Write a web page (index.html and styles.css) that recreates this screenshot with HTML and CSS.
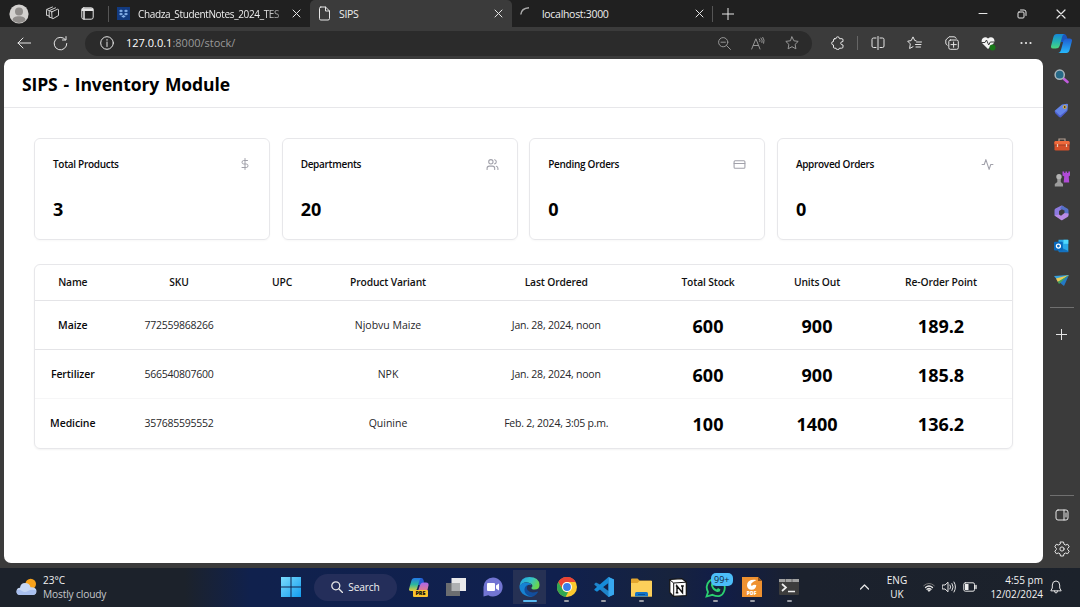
FILE: index.html
```html
<!DOCTYPE html>
<html lang="en">
<head>
<meta charset="utf-8">
<title>SIPS</title>
<link rel="stylesheet" href="styles.css">
</head>
<body>
<div class="screen">
  <div class="tabbar">
    <span class="slot w37"><svg width="20" height="20" viewBox="0 0 20 20"><circle cx="10" cy="10" r="9.6" fill="#d3d1cf"/><circle cx="10" cy="7.4" r="4" fill="#8f8c8a"/><path d="M3.600 16.200c0-3 2.500-4 6.400-4s6.400 1 6.400 4A9 9 0 0 1 10 19a9 9 0 0 1-6.400-2.800z" fill="#8f8c8a"/></svg></span>
    <span class="slot w31"><svg class="line thin" width="15" height="15" viewBox="0 0 15 15"><path d="M7 5.800 12.500 3.200Q13.500 3 13.500 4V9.500L8 12.700Q7 13 7 12zM4.200 11V5.500Q4.200 4.700 5 4.300L10.500 1.800M1.500 9V4.200Q1.500 3.500 2.200 3.200L7.500 1M7 5.800 4.500 4.700M4.200 11 7 12M1.500 9l2.700 1M1.800 3.500l2.500 1.200"/></svg></span>
    <span class="slot w39"><svg class="line" width="13" height="13" viewBox="0 0 13 13"><rect x=".8" y=".8" width="11.400" height="11.400" rx="2"/><path d="M1.500 2.200h10M1.500 3.200h10" stroke-width="1.800"/><path d="M3 4v8" stroke-width="1.500"/></svg></span>
    <div class="tab first">
      <svg class="favicon" width="13" height="13" viewBox="0 0 13 13"><path fill="#123a80" d="M0 0h13v13H0z"/><path fill="#83aee8" d="m4 2.500 2.200 1.400L4 5.300 1.800 3.900zm5 0 2.200 1.400L9 5.300 6.800 3.900zM4 5.700l2.200 1.400L4 8.500 1.800 7.100zm5 0 2.200 1.400L9 8.500 6.800 7.100zM6.500 8l2.200 1.400-2.200 1.400-2.200-1.400z"/></svg>
      <span class="tab-title fade">Chadza_StudentNotes_2024_TES</span>
      <svg class="line close" width="9" height="9" viewBox="0 0 9 9"><path d="m1 1 7 7M8 1 1 8"/></svg>
    </div>
    <div class="tab active">
      <svg class="line favicon" width="13" height="15" viewBox="0 0 13 15"><path d="M2.800 1H7.500L11.500 5V12.500Q11.500 14 10 14H2.800Q1.500 14 1.500 12.500V2.400Q1.500 1 2.800 1zM7.500 1V5H11.500"/></svg>
      <span class="tab-title">SIPS</span>
      <svg class="line close" width="9" height="9" viewBox="0 0 9 9"><path d="m1 1 7 7M8 1 1 8"/></svg>
    </div>
    <div class="tab last">
      <svg class="favicon" width="13" height="13" viewBox="0 0 13 13"><path d="M.8 7.500Q1.500 1.300 9 .8" fill="none" stroke="#aaa" stroke-width="1.500"/></svg>
      <span class="tab-title">localhost:3000</span>
      <svg class="line close" width="9" height="9" viewBox="0 0 9 9"><path d="m1 1 7 7M8 1 1 8"/></svg>
    </div>
    <span class="slot w30"><svg class="line" width="12" height="12" viewBox="0 0 12 12"><path d="M6 0v12M0 6h12"/></svg></span>
    <div class="window-controls">
      <svg class="line" width="10" height="10" viewBox="0 0 10 10"><path d="M1 4.500h8"/></svg>
      <svg class="line" width="10" height="10" viewBox="0 0 10 10"><rect x="1" y="3" width="6" height="6" rx="1"/><path d="M3.500 1H7Q9 1 9 3V6.500"/></svg>
      <svg class="line" width="10" height="10" viewBox="0 0 10 10"><path d="m1 1 8 8M9 1 1 9" stroke-width="1.200"/></svg>
    </div>
  </div>

  <div class="toolbar">
    <span class="slot w37"><svg class="line" width="14" height="12" viewBox="0 0 14 12"><path d="M14 6H1M6 1 1 6l5 5"/></svg></span>
    <span class="slot w37"><svg class="line" width="15" height="15" viewBox="0 0 15 15"><path d="M12.300 3.500A6.300 6.300 0 1 0 13.800 7.500M13 .6V4H9.500"/></svg></span>
    <div class="address">
      <svg class="line" width="14" height="14" viewBox="0 0 14 14"><circle cx="7" cy="7" r="6.300"/><path d="M7 6v4.500M7 3.500v.8"/></svg>
      <span class="url">127.0.0.1<span class="path">:8000/stock/</span></span>
      <span class="slot w34 dim"><svg class="line" width="13" height="13" viewBox="0 0 13 13"><circle cx="5.200" cy="5.200" r="4.600"/><path d="M3 5.200h4.400M8.500 8.500l4 4"/></svg></span>
      <span class="slot w34 dim"><svg class="line" width="14" height="13" viewBox="0 0 14 13"><path d="M.7 12 4.900 1.800 9 12M2.300 8.500h5.200M8.300 2q1.200 1 .6 2.500M10 1q2 2 1 4.500M11.800.3q2.200 2.700.9 6"/></svg></span>
      <span class="slot w34 dim"><svg class="line" width="14" height="14" viewBox="0 0 14 14"><path d="m7 .9 1.900 3.900 4.300.6-3.100 3 .8 4.400L7 10.700l-3.900 2.100.8-4.400-3.100-3 4.300-.6z"/></svg></span>
    </div>
    <span class="slot w37 puzzle"><svg class="line" width="14" height="14" viewBox="0 0 14 14"><path d="M3.500 2.700H5Q5 .8 6.700.8T8.500 2.700H11Q12 2.700 12 4V5.500Q9.700 5.500 9.700 7.200T12 9V11Q12 12.200 10.700 12.200H8.500Q8.500 13.500 6.700 13.500T5 12.200H3.500Q2.500 12.200 2.500 11V9Q.7 9 .7 7.200T2.500 5.500V4Q2.500 2.700 3.500 2.700z"/></svg></span>
    <span class="divider"></span>
    <span class="slot w37"><svg class="line" width="14" height="14" viewBox="0 0 14 14"><path d="M5 2H2.500Q1 2 1 3.500V10Q1 11.500 2.500 11.500H5M9 2H11.500Q13 2 13 3.500V10Q13 11.500 11.500 11.500H9M7 0V14"/></svg></span>
    <span class="slot w37"><svg class="line" width="15" height="14" viewBox="0 0 15 14"><path d="M9 4.700 7.800 4.600 6 .9 4.200 4.600.7 5.200l2.600 2.700-.7 4.600L6 10.700M9.500 6h5M8.500 8.500h5.500M9 11h4.500"/></svg></span>
    <span class="slot w37"><svg class="line" width="14" height="14" viewBox="0 0 14 14"><path d="M2.200 9.200Q.8 8.500.8 7V4L4 .8H9Q10.700.8 11.200 2.300"/><rect x="3.800" y="4" width="9.500" height="9.300" rx="1.600"/><path d="M8.600 6v5.300M6 8.600h5.300"/></svg></span>
    <span class="slot w37"><svg width="15" height="15" viewBox="0 0 15 15"><path d="M7 13 1.500 7.500Q-.3 5 1.500 2.500Q4.500 0 7 2.500 10 0 12.700 2.500 14.300 5 12.500 7.500z" fill="#f3f3f3"/><path d="M.5 6.500H4L5.500 4l2.200 5 1.600-3H13" fill="none" stroke="#3b3b3b"/><circle cx="11.500" cy="11.500" r="3" fill="#187718"/></svg></span>
    <span class="slot w37"><svg width="12" height="4" viewBox="0 0 12 4" fill="#e8e8e8"><circle cx="1.500" cy="2" r="1.100"/><circle cx="6" cy="2" r="1.100"/><circle cx="10.500" cy="2" r="1.100"/></svg></span>
    <span class="slot w34"><svg width="21" height="19" viewBox="0 0 20 19" preserveAspectRatio="none"><defs><linearGradient id="cp1" x2="0" y2="1"><stop stop-color="#1687d8"/><stop offset=".55" stop-color="#25b5b0"/><stop offset="1" stop-color="#4cd57c"/></linearGradient><linearGradient id="cp2" x2="0" y2="1"><stop stop-color="#205bd0"/><stop offset="1" stop-color="#26b9fc"/></linearGradient></defs><path d="M10 0h2.500Q14.500 0 15 2.500l.7 2.200q-2.900.7-3.500 3.500L9 8z" fill="#1b56bd"/><path d="M5.500 0H13Q11.200 0 10.500 3L8.200 12Q7.500 14.500 4.500 14.500H2Q-.8 14.500.3 11L2.300 3Q3 0 5.500 0z" fill="url(#cp1)"/><path d="M14.500 19H7Q8.800 19 9.500 16L11.800 7Q12.500 4.500 15.500 4.500H18Q20.800 4.500 19.700 8L17.700 16Q17 19 14.500 19z" fill="url(#cp2)"/></svg></span>
  </div>

  <div class="workspace">
    <main class="page">
      <header class="page-header"><h1>SIPS - Inventory Module</h1></header>
      <section class="cards">
        <article class="card"><div class="card-top"><h2>Total Products</h2><svg class="feather" width="12" height="12" viewBox="0 0 24 24"><path d="M12 1v22M17 5H9.500a3.500 3.500 0 0 0 0 7h5a3.500 3.500 0 0 1 0 7H6"/></svg></div><strong>3</strong></article>
        <article class="card"><div class="card-top"><h2>Departments</h2><svg class="feather" width="13" height="13" viewBox="0 0 24 24"><path d="M16 21v-2a4 4 0 0 0-4-4H6a4 4 0 0 0-4 4v2M22 21v-2a4 4 0 0 0-3-3.870M16 3.130a4 4 0 0 1 0 7.750"/><circle cx="9" cy="7" r="4"/></svg></div><strong>20</strong></article>
        <article class="card"><div class="card-top"><h2>Pending Orders</h2><svg class="feather" width="13" height="13" viewBox="0 0 24 24"><rect x="2" y="5" width="20" height="14" rx="2"/><path d="M2 10h20"/></svg></div><strong>0</strong></article>
        <article class="card"><div class="card-top"><h2>Approved Orders</h2><svg class="feather" width="13" height="13" viewBox="0 0 24 24"><path d="M22 12h-4l-3 9L9 3l-3 9H2"/></svg></div><strong>0</strong></article>
      </section>
      <section class="stock">
        <div class="row head"><span>Name</span><span>SKU</span><span>UPC</span><span>Product Variant</span><span>Last Ordered</span><span>Total Stock</span><span>Units Out</span><span>Re-Order Point</span></div>
        <div class="row"><b>Maize</b><span class="sku">772559868266</span><span></span><span>Njobvu Maize</span><span class="date">Jan. 28, 2024, noon</span><strong>600</strong><strong>900</strong><strong>189.2</strong></div>
        <div class="row faint"><b>Fertilizer</b><span class="sku">566540807600</span><span></span><span>NPK</span><span class="date">Jan. 28, 2024, noon</span><strong>600</strong><strong>900</strong><strong>185.8</strong></div>
        <div class="row"><b>Medicine</b><span class="sku">357685595552</span><span></span><span>Quinine</span><span class="date">Feb. 2, 2024, 3:05 p.m.</span><strong>100</strong><strong>1400</strong><strong>136.2</strong></div>
      </section>
    </main>

    <aside class="sidebar">
      <div class="apps">
        <svg width="15" height="15" viewBox="0 0 15 15"><path d="m9.500 9.500 4 3.500" stroke="#c15bdc" stroke-width="2.600" stroke-linecap="round"/><circle cx="5.700" cy="5.700" r="4.600" fill="#276987" stroke="#a9b6bd" stroke-width="1.500"/></svg>
        <svg width="15" height="15" viewBox="0 0 15 15"><path d="M8 1.500 13 .7Q14 .7 14 1.700L13.500 7 7 13.500Q6 14 5 13L1 9Q.3 8 1 7.500z" fill="#6384e8"/><path d="m1 8 5 4.700L13.500 7v1L7 14.300Q6 14.800 5 14L1 10z" fill="#4b5dc9"/><circle cx="10.700" cy="4" r="1.500" fill="#493e32" stroke="#e5b940"/></svg>
        <svg width="16" height="13" viewBox="0 0 16 13"><path d="M5 3V1h6v2" fill="none" stroke="#b6a092" stroke-width="1.200"/><rect x=".5" y="3" width="15" height="9.500" rx="1.300" fill="#d4502a"/><path d="M.5 4.300Q.5 3 2 3h12q1.500 0 1.500 1.300V7H.5z" fill="#ef6a3c"/><path d="M0 7h16" stroke="#9d3c24"/><path d="M3.500 6v3M12.500 6v3" stroke="#e9cdba" stroke-width="1.200"/></svg>
        <svg width="16" height="16" viewBox="0 0 16 16"><path d="M8.500.5h1.700V2h1.200V.5h1.700V2h1.200V.5H16v4l-1.300 1 .5 6H9.700l.5-6-1.700-1z" fill="#b04bd6"/><circle cx="5" cy="5.800" r="2.700" fill="#b4b4b4"/><path d="M3.300 8h3.500v3l2.200 2v2.500H.8V13L3.300 11z" fill="#9c9c9c"/></svg>
        <svg width="15" height="16" viewBox="0 0 15 16"><path d="M7.500.5 1.500 3.500Q.5 4 .5 5.300v5.200L5 13V6l4.500-3V1.300z" fill="#8d7ae0"/><path d="M8 .5l5.700 3.200Q14.500 4.200 14.500 5.500V10L10.500 8V5.500L6 3.500z" fill="#5570c8"/><path d="M.5 10.500 7 15q.8.500 1.500 0l5-3q1-.7 1-1.700V8.500L10.500 8 7 10.800 5 9.500z" fill="#b98be5"/></svg>
        <svg width="15" height="14" viewBox="0 0 15 14"><path d="M4.500.8h9q.8 0 .8.800v11H4.500z" fill="#28a8e8"/><path d="M9.500.8h4.800v4H9.500z" fill="#50d9ff"/><path d="M5 7.500 14.300 12v1.200H5z" fill="#1472bf"/><rect y="2.700" width="8.800" height="8.800" rx="1" fill="#0869bd"/><circle cx="4.400" cy="7.100" r="2" fill="none" stroke="#fff" stroke-width="1.300"/></svg>
        <svg width="15" height="13" viewBox="0 0 15 13"><path d="M0 2 15 1 5 8z" fill="#38a1dc"/><path d="M15 1 10 12 5 8z" fill="#2379c4"/><path d="M2 4.500 15 1 3.800 8z" fill="#eacb54"/><path d="M3.800 8 15 1 5 10z" fill="#47a45b"/></svg>
      </div>
      <div class="rule"></div>
      <svg class="line add" width="11" height="11" viewBox="0 0 11 11"><path d="M5.500 0v11M0 5.500h11"/></svg>
      <div class="rule bottom-rule"></div>
      <svg class="line panel" width="14" height="12" viewBox="0 0 14 12"><rect x="1" y="1" width="12" height="10" rx="2"/><path d="M9 1v10M11 4v4"/></svg>
      <svg class="line gear" width="16" height="16" viewBox="0 0 16 16"><path d="m6.500 1h3l.5 2.200 1.500.8 2.200-.7 1.500 2.500L13.700 7.300v1.400l1.500 1.500-1.500 2.500-2.200-.7-1.500.8L9.500 15h-3L6 12.800l-1.500-.8-2.200.7-1.500-2.500 1.500-1.500V7.300L.8 5.800l1.500-2.500L4.500 4 6 3.200z"/><circle cx="8" cy="8" r="2.100"/></svg>
    </aside>
  </div>

  <footer class="taskbar">
    <div class="weather">
      <svg width="21" height="18" viewBox="0 0 21 18"><circle cx="14.700" cy="6" r="5.300" fill="#f6a11b"/><path d="M4.500 17Q.5 17 .5 13.500.5 10 4 9.700 4.500 5 9 5t5.500 4.200Q20.500 9 20.500 13q0 4-4 4z" fill="#c6d7f5"/><path d="M1 12q2.500-1 5 1t6 0 8-.5V14q-.5 3-3.500 3h-12Q.8 17 .5 14z" fill="#a9c0ef"/></svg>
      <div class="weather-text"><span>23°C</span><span class="grey">Mostly cloudy</span></div>
    </div>
    <div class="launcher">
      <svg class="start" width="20" height="20" viewBox="0 0 20 20"><defs><linearGradient id="win" x2="1" y2="1"><stop stop-color="#7cdcfd"/><stop offset="1" stop-color="#129cef"/></linearGradient></defs><path fill="url(#win)" d="M0 0h9.500v9.500H0zM10.500 0H20v9.500h-9.500zM0 10.500h9.500V20H0zM10.500 10.500H20V20h-9.500z"/></svg>
      <div class="search"><svg class="line" width="12" height="12" viewBox="0 0 12 12"><circle cx="4.800" cy="4.800" r="4" stroke-width="1.300"/><path d="m8 8 3.500 3.500" stroke-width="1.400"/></svg><span>Search</span></div>
      <span class="app"><svg width="20" height="20" viewBox="0 0 20 20"><defs><linearGradient id="pre1" x2="0" y2="1"><stop stop-color="#2278e8"/><stop offset=".5" stop-color="#2cb79e"/><stop offset="1" stop-color="#e6cf39"/></linearGradient><linearGradient id="pre2" x2="0" y2="1"><stop stop-color="#aa66ed"/><stop offset="1" stop-color="#fa8360"/></linearGradient></defs><path d="M10 1h2.500q2 0 2.500 4.500-2 .5-3 3L9 8z" fill="#235bd0"/><path d="M5.500 1H12Q10.800 2 10.300 4L8 12Q7.500 14 4.500 14H2Q-.8 14 .3 11L2.300 4Q3 1 5.500 1z" fill="url(#pre1)"/><path d="M14 17H8L11 8Q12 5.500 14 5.500h3q3 0 2.500 3L18 15z" fill="url(#pre2)"/></svg><i class="pre">PRE</i></span>
      <span class="app"><svg width="20" height="20" viewBox="0 0 20 20"><path d="M5.500 1H20v13H5.500z" fill="#e9e9ea"/><path d="M0 6h14v13H0z" fill="#6b6d70"/><path d="M5.500 6H14v8H5.500z" fill="#aeb0b2"/></svg></span>
      <span class="app"><svg width="20" height="20" viewBox="0 0 20 20"><path d="M10 .5a9.500 9.500 0 1 1-4.700 17.700L.5 19.500V10A9.500 9.500 0 0 1 10 .5z" fill="#7275d2"/><rect x="4" y="6" width="8" height="8" rx="1" fill="#fff"/><path d="m13 8.500 3-2v7l-3-2z" fill="#fff"/></svg></span>
      <span class="app current"><svg width="21" height="20" viewBox="0 0 21 20"><defs><linearGradient id="eg" x2="1" y2=".4"><stop stop-color="#1e9fe5"/><stop offset=".6" stop-color="#36c3c4"/><stop offset="1" stop-color="#68d650"/></linearGradient></defs><path d="M.5 9Q1.500 0 10.500 0 20 0 20.500 8q0 4.500-5 4.500-3.500 0-3-2 1.800-1.500 0-3.500Q6 2.500.5 9z" fill="url(#eg)"/><path d="M.5 9Q3 5 8 5.500q3.500.3 4.500 2.500Q7 7 7.200 12q.5 5 6.300 7.500-4 1-8-1.500Q0 14.500.5 9z" fill="#1683d2"/><path d="M9.500 7.500q-2.800 2.500-1 5.500 3 4 10 1.500.8 0 .2 1-3.200 5-7.700 4Q5 17.500 5.500 12q.5-3.500 4-4.500z" fill="#124e9d"/></svg></span>
      <span class="app run"><svg width="20" height="20" viewBox="0 0 20 20"><circle cx="10" cy="10" r="10" fill="#fcc92f"/><path d="M1.300 5A10 10 0 0 1 18.700 5H10a5 5 0 0 0-4.500 7z" fill="#e94335"/><path d="M1.300 5 5.700 12.500A5 5 0 0 0 11.200 15L8.500 19.900A10 10 0 0 1 1.300 5z" fill="#31a652"/><circle cx="10" cy="10" r="5" fill="#fff"/><circle cx="10" cy="10" r="3.900" fill="#3b7de9"/></svg></span>
      <span class="app run"><svg width="20" height="20" viewBox="0 0 20 20"><path d="m14.500 0 5.500 2.500v15L14.500 20 .5 7.800Q0 7.200.5 6.700L2 5.500l3 1.500L14.500 14z" fill="#1f84ca"/><path d="M14.500 0v6L3 14.800.6 13.200Q0 12.500.6 12z" fill="#168bd8"/><path d="m14.500 0 5.500 2.500v15L14.500 20z" fill="#37a7ef"/></svg></span>
      <span class="app run"><svg width="21" height="19" viewBox="0 0 21 19"><path d="M0 1.500Q0 .5 1 .5h5.500l2 2H20q1 0 1 1v15H0z" fill="#e3a52e"/><path d="M0 5h6.500l2-2H21v15.500H0z" fill="#fccf5a"/><path d="M4 18.500v-3q0-1.500 1.500-1.500h10q1.500 0 1.500 1.500v3z" fill="#1373c7"/><path d="M7 16.500h7" stroke="#064f94"/></svg></span>
      <span class="app"><svg width="18" height="19" viewBox="0 0 18 19"><path d="m.8 1.500 12-.9L17.300 4v13.500L4.500 18.400.8 14.500z" fill="#fff" stroke="#111" stroke-width="1.200"/><path d="m1 2 3.700 3 12.300-.8M4.700 5v13" fill="none" stroke="#111"/><path d="M8 14.700V8l5.500 6.700V8M6.800 8h1.700M6.800 14.700h2.500M12 8h2.800" fill="none" stroke="#111" stroke-width="1.400"/></svg></span>
      <span class="app run"><svg width="21" height="21" viewBox="0 0 21 21"><path d="M1.500 19.500 3 15Q-.3 8.500 4.500 4t11-.5 3.500 11T7.500 17.800z" fill="#15233a" stroke="#2bd071" stroke-width="1.800"/><path d="M7.500 5.500q-2 .5-1.500 3 1.500 5 6 6.500 3.200.5 3.500-2.500L13 11l-1.300 1.500Q9 11.500 8 9l1-1z" fill="#2bd071"/></svg><i class="badge">99+</i></span>
      <span class="app run"><svg width="20" height="20" viewBox="0 0 20 20"><path d="M0 0h16l4 4v16H0z" fill="#ef9130"/><path d="m16 0 4 4h-4z" fill="#8d501b"/><path d="M14.500 3Q5 2 5 8.500q.3 4 4.500 4.300 4.500 0 4.800-4.800-3.300-1-4.300 1-1.500-.5-.7-2.500 1.500-1.800 5.200-3.500z" fill="#fff"/></svg><i class="pdf">PDF</i></span>
      <span class="app run"><svg width="20" height="16" viewBox="0 0 20 16"><rect width="20" height="16" rx="1" fill="#3d3d3d"/><path d="M0 0h20v3H0z" fill="#a1a1a1"/><path d="M6.500 0v3M13 0v3" stroke="#666"/><path d="m3 5 4 3.500L3 12M9 12.500h7" fill="none" stroke="#eee" stroke-width="1.700"/></svg></span>
    </div>
    <div class="tray">
      <svg class="line" width="9" height="6" viewBox="0 0 9 6"><path d="m.5 5 4-4 4 4" stroke-width="1.300"/></svg>
      <div class="lang"><span>ENG</span><span>UK</span></div>
      <svg class="line" width="12" height="10" viewBox="0 0 12 10"><path d="M.7 3.700Q6-1 11.300 3.700" stroke="#777"/><path d="M2.500 5.500Q6 2.400 9.500 5.500M4 7.300q2-1.600 4 0" stroke-width="1.300"/><circle cx="6" cy="8.500" r=".8" fill="#eee"/></svg>
      <svg class="line" width="14" height="12" viewBox="0 0 14 12"><path d="M.6 4H3L6 1.200V10.800L3 8H.6zM8 4q1.300 2 0 4M10 2.500q2.400 3.500 0 7M12 1q3 5 0 10"/></svg>
      <svg class="line" width="14" height="10" viewBox="0 0 14 10"><rect x=".8" y=".8" width="10.700" height="8.400" rx="1.500"/><path d="M2 2h3.500v6H2z" fill="#eee" stroke="none"/><path d="M13 3.500v3" stroke-width="1.400"/></svg>
      <div class="clock"><span>4:55 pm</span><span class="day">12/02/2024</span></div>
      <svg class="line bell" width="12" height="14" viewBox="0 0 12 14"><path d="M1 10.500 2.300 8V5Q2.500 1 6 1t3.700 4v3L11 10.500zM4.500 11q0 2 1.500 2t1.500-2"/></svg>
    </div>
  </footer>
</div>
</body>
</html>
```
FILE: styles.css
```css
* { box-sizing: border-box; }
body { margin: 0; font-family: "Open Sans", "Noto Sans", sans-serif; font-size: 11px; color: #09090b; }
h1, h2 { margin: 0; }
svg { display: block; flex: none; }
.screen { width: 1080px; height: 607px; display: flex; flex-direction: column; overflow: hidden; background: #3b3b3b; }
.line { fill: none; stroke: #e6e6e6; stroke-width: 1; stroke-linecap: round; stroke-linejoin: round; }
.thin { stroke: #cfcfcf; }
.dim .line { stroke: #969696; }
.slot { display: flex; align-items: center; justify-content: center; flex: none; height: 100%; }
.w30 { width: 30px; }
.w31 { width: 31px; }
.w34 { width: 34px; }
.w37 { width: 37px; }
.w39 { width: 39px; }

/* Tab strip */
.tabbar { height: 27px; flex: none; display: flex; background: #202020; color: #eee; }
.tab { height: 27px; width: 202px; flex: none; display: flex; align-items: center; padding: 0 9px 0 8px; }
.tab.first { width: 203px; padding-left: 10px; background: linear-gradient(#555, #555) 1px 6px / 1px 16px no-repeat; }
.tab.active { background: #3b3b3b; border-radius: 5px 5px 0 0; }
.tab.last { width: 201px; background: linear-gradient(#555, #555) right 6px / 1px 16px no-repeat; }
.favicon { margin-right: 8px; }
.tab.last .favicon { margin-right: 9px; }
.tab-title { flex: 1; min-width: 0; white-space: nowrap; font-size: 10.500px; letter-spacing: -.3px; }
.fade { font-size: 10px; letter-spacing: -.35px; -webkit-mask-image: linear-gradient(90deg, #000 86%, #0005 100%); mask-image: linear-gradient(90deg, #000 86%, #0005 100%); }
.close { margin-left: 7px; }
.window-controls { margin-left: auto; display: flex; align-items: center; gap: 29px; padding-right: 14px; }

/* Navigation bar */
.toolbar { height: 32px; flex: none; display: flex; align-items: center; padding-left: 5px; }
.address { width: 727px; height: 25px; margin-left: 6px; padding: 0 3px 0 15px; display: flex; align-items: center; border-radius: 13px; background: #2b2b2b; }
.url { flex: 1; margin-left: 12px; font-size: 11px; color: #fff; position: relative; top: -1px; }
.path { color: #999; }
.puzzle { margin-left: 7px; }
.divider { width: 1px; height: 14px; margin-left: 1px; background: #666; }
.divider + .slot { margin-left: 1px; }

.workspace { height: 509px; flex: none; display: flex; }
.page { width: 1039px; height: 504px; margin-left: 4px; border-radius: 7px; background: #fff; overflow: hidden; }
.page-header { height: 49px; padding: 2px 18px 0; display: flex; align-items: center; border-bottom: 1px solid #e7e7ea; }
.page-header h1 { font-size: 17.500px; line-height: 24px; letter-spacing: -.1px; word-spacing: 1.300px; color: #000; }
.cards { margin: 30px 30px 24px; display: grid; grid-template-columns: repeat(4, 1fr); gap: 11.500px; }
.card { height: 102px; padding: 17px 18px 0; border: 1px solid #e7e7ea; border-radius: 6px; box-shadow: 0 1px 2px #00000008; }
.card-top { height: 16px; display: flex; align-items: center; justify-content: space-between; }
.card h2 { font-size: 10px; font-weight: 600; letter-spacing: -.3px; }
.card strong { display: block; margin-top: 24px; font-size: 18px; line-height: 26px; color: #000; }
.feather { fill: none; stroke: #a1a1aa; stroke-width: 2; stroke-linecap: round; stroke-linejoin: round; }

/* Stock table */
.stock { margin: 0 30px; border: 1px solid #e7e7ea; border-radius: 6px; box-shadow: 0 1px 2px #0000000d; }
.row { height: 49px; display: grid; grid-template-columns: 75.500px 137px 69px 143px 193.500px 110px 108px 140px; align-items: center; text-align: center; border-bottom: 1px solid #e4e4e7; font-size: 10.500px; white-space: nowrap; color: #27272a; }
.row:last-child { border-bottom: 0; padding-bottom: 1px; }
.row.faint { border-color: #f6f6f7; }
.row.head { height: 36px; padding-bottom: 1px; font-size: 10.300px; font-weight: 600; letter-spacing: -.15px; color: #111; }
.row b { font-weight: 600; color: #09090b; letter-spacing: -.1px; }
.row strong { font-size: 18px; color: #000; padding-top: 2px; }
.date { letter-spacing: -.22px; }
.sku { letter-spacing: -.24px; }

/* Edge sidebar */
.sidebar { width: 37px; display: flex; flex-direction: column; align-items: center; }
.apps { display: grid; grid-auto-rows: 33.900px; place-items: center; height: 248px; padding-top: 1px; align-content: start; }
.rule { width: 24px; height: 1px; background: #707070; }
.add { margin-top: 21px; }
.bottom-rule { margin-top: 155px; }
.panel { margin-top: 13px; }
.gear { margin-top: 20px; }

/* Taskbar */
.taskbar { height: 39px; flex: none; display: flex; align-items: center; color: #f2f2f2; padding-bottom: 1px; background: linear-gradient(90deg, #1c222b 0, #1c222b 185px, #10214d 250px, #10204e 560px, #17233d 670px, #111d48 720px, #1b212d 800px, #1c222b 100%); }
.weather { width: 281px; padding-left: 16px; display: flex; align-items: center; gap: 6px; }
.weather-text, .lang, .clock { display: flex; flex-direction: column; font-size: 10px; line-height: 13.500px; }
.weather-text, .clock { padding-top: 1px; }
.grey { color: #c6c8cc; font-size: 10.200px; letter-spacing: -.15px; }
.launcher { display: flex; align-items: center; }
.search { width: 83px; height: 27px; margin: 0 3px 0 13px; border-radius: 14px; display: flex; align-items: center; justify-content: center; gap: 5px; background: #242e5a; font-size: 10.200px; letter-spacing: -.15px; }
.app { width: 37.100px; height: 38px; display: flex; align-items: center; justify-content: center; position: relative; }
.current { background: linear-gradient(#263154, #263154) center / 33px 34px no-repeat; }
.run::after, .current::after { content: ""; position: absolute; bottom: 4px; left: 16px; width: 5px; height: 2px; border-radius: 1px; background: #9a9da6; }
.current::after { left: 12px; width: 14px; background: #58b7ef; }
.app i { position: absolute; font-style: normal; }
.pre { left: 13px; top: 22px; width: 15px; border-radius: 1px; background: #fcc32c; color: #111; font-size: 5.500px; line-height: 7px; font-weight: 800; text-align: center; }
.badge { left: 14px; top: 5px; width: 22px; height: 13px; border-radius: 5px; background: #4cbdf9; color: #10253b; font-size: 9px; line-height: 13px; text-align: center; }
.pdf { left: 13px; top: 23px; color: #fff; font-size: 5px; line-height: 5px; font-weight: 800; }
.tray { margin-left: auto; padding-right: 18px; display: flex; align-items: center; }
.lang { width: 30px; margin: 0 11px 0 13px; text-align: center; padding-top: 1px; }
.tray > svg + svg { margin-left: 7px; }
.clock { width: 66px; text-align: right; }
.day { letter-spacing: -.05px; }
.bell { margin-left: 7px; }
```
